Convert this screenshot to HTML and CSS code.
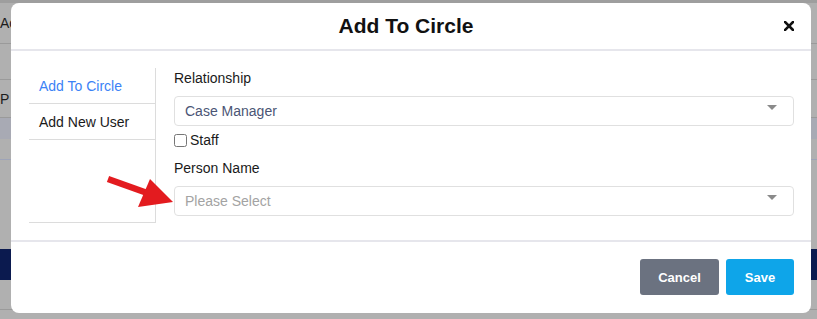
FILE: index.html
```html
<!DOCTYPE html>
<html>
<head>
<meta charset="utf-8">
<link rel="stylesheet" href="styles.css">
</head>
<body>
<div class="backdrop">
  <div class="bg-top"></div>
  <div class="bg-row bg-row-a"><span class="bg-text">Ac</span></div>
  <div class="bg-row bg-row-b"></div>
  <div class="bg-row bg-row-c"><span class="bg-text">P</span></div>
  <div class="bg-band"></div>
  <div class="bg-row bg-row-d"></div>
  <div class="bg-gap"></div>
  <div class="bg-navy"></div>
  <div class="bg-row bg-row-e"></div>
</div>

<div class="modal">
  <div class="modal-header">
    <h2 class="modal-title">Add To Circle</h2>
    <svg class="close" width="10" height="10" viewBox="0 0 10 10"><path d="M1 1L9 9M9 1L1 9" stroke="#111" stroke-width="2.6" stroke-linecap="square"/></svg>
  </div>
  <div class="modal-body">
    <ul class="tabs">
      <li class="tab active">Add To Circle</li>
      <li class="tab">Add New User</li>
    </ul>
    <div class="form">
      <label class="label">Relationship</label>
      <div class="select"><span class="value">Case Manager</span><span class="caret"></span></div>
      <label class="check"><input type="checkbox" class="checkbox"><span>Staff</span></label>
      <label class="label label-2">Person Name</label>
      <div class="select"><span class="placeholder">Please Select</span><span class="caret"></span></div>
    </div>
  </div>
  <div class="modal-footer">
    <button class="btn btn-cancel">Cancel</button>
    <button class="btn btn-save">Save</button>
  </div>
</div>

<svg class="arrow" width="817" height="319" viewBox="0 0 817 319">
  <line x1="108" y1="179" x2="150" y2="194" stroke="#e31b1f" stroke-width="6.5"/>
  <polygon points="150,179 173,202 138,207" fill="#e31b1f"/>
</svg>
</body>
</html>
```

FILE: styles.css
```css
html, body {
  margin: 0;
  padding: 0;
}
body {
  width: 817px;
  height: 319px;
  overflow: hidden;
  background: #b0b0b0;
  font-family: "Liberation Sans", Arial, sans-serif;
  position: relative;
}
.backdrop {
  display: flex;
  flex-direction: column;
}
.bg-top {
  height: 3px;
  background: #9e9e9e;
}
.bg-row {
  border-bottom: 1px solid #9a9a9a;
  display: flex;
  align-items: center;
}
.bg-row-a { height: 40px; }
.bg-row-b { height: 35px; }
.bg-row-c { height: 37px; }
.bg-band { height: 21px; background: #a8aab4; }
.bg-row-d { height: 20px; border-bottom-color: #9ea4b8; }
.bg-gap { height: 89px; }
.bg-navy { height: 31px; background: #0b1a4f; }
.bg-row-e { height: 29px; }
.bg-text {
  font-size: 14px;
  color: #1c1c1c;
}
.modal {
  position: absolute;
  left: 11px;
  top: 3px;
  width: 800px;
  height: 310px;
  background: #fff;
  border-radius: 8px;
  display: flex;
  flex-direction: column;
  overflow: hidden;
}
.modal-header {
  height: 46px;
  border-bottom: 2px solid #e6e6ec;
  display: flex;
  align-items: center;
  justify-content: center;
  padding-right: 10px;
  position: relative;
}
.modal-title {
  margin: 0;
  font-size: 21px;
  font-weight: bold;
  color: #111;
}
.close {
  position: absolute;
  right: 17px;
  top: 18px;
}
.modal-body {
  height: 172px;
  padding: 17px 17px 0 18px;
  border-bottom: 2px solid #e6e6ec;
  display: flex;
  gap: 18px;
}
.tabs {
  list-style: none;
  margin: 0;
  padding: 0;
  width: 126px;
  height: 154px;
  border-right: 1px solid #dcdcdc;
  border-bottom: 1px solid #dcdcdc;
  flex-shrink: 0;
}
.tab {
  height: 35px;
  border-bottom: 1px solid #dcdcdc;
  padding-left: 10px;
  font-size: 14px;
  color: #1a1a1a;
  display: flex;
  align-items: center;
}
.tab.active {
  color: #3b82f6;
}
.form {
  flex: 1;
  display: flex;
  flex-direction: column;
}
.label {
  font-size: 14px;
  color: #1a1a1a;
  height: 16px;
  line-height: 16px;
  margin-top: 2px;
  margin-bottom: 10px;
}
.label-2 {
  margin-top: 12px;
}
.select {
  height: 28px;
  border: 1px solid #e0e0e0;
  border-radius: 4px;
  display: flex;
  align-items: center;
  padding-left: 10px;
  position: relative;
  font-size: 14px;
}
.value {
  color: #4b5575;
}
.placeholder {
  color: #a3a3a3;
}
.caret {
  position: absolute;
  right: 16px;
  top: 8px;
  width: 0;
  height: 0;
  border-left: 5px solid transparent;
  border-right: 5px solid transparent;
  border-top: 5px solid #8a8a8a;
}
.check {
  display: flex;
  align-items: center;
  font-size: 14px;
  color: #1a1a1a;
  height: 16px;
  margin-top: 6px;
}
.checkbox {
  margin: 0 3px 0 0;
  width: 13px;
  height: 13px;
}
.modal-footer {
  flex: 1;
  display: flex;
  justify-content: flex-end;
  align-items: flex-start;
  padding: 17px 17px 0 0;
  gap: 7px;
}
.btn {
  height: 36px;
  border: none;
  border-radius: 3px;
  color: #fff;
  font-family: "Liberation Sans", Arial, sans-serif;
  font-size: 13px;
  font-weight: bold;
  cursor: pointer;
}
.btn-cancel {
  width: 79px;
  background: #6b7280;
}
.btn-save {
  width: 68px;
  background: #0ea5e9;
}
.arrow {
  position: absolute;
  left: 0;
  top: 0;
  pointer-events: none;
}
```
